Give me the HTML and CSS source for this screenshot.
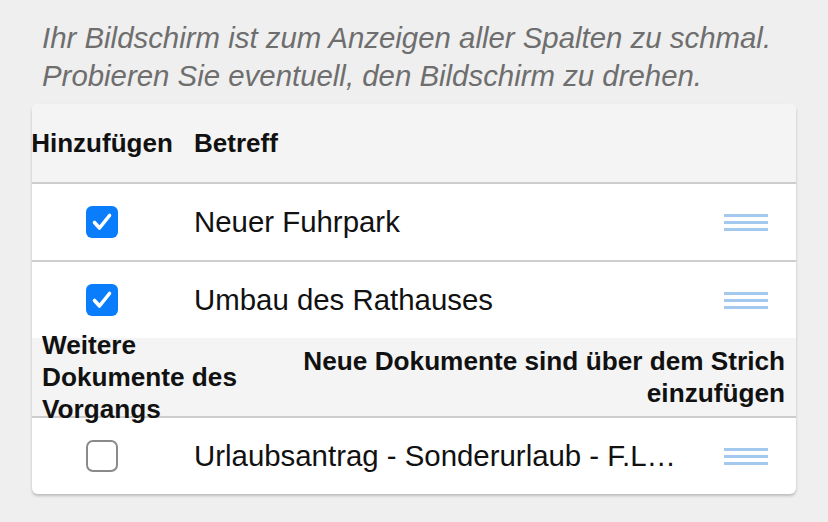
FILE: index.html
```html
<!DOCTYPE html>
<html lang="de">
<head>
<meta charset="utf-8">
<title>Dokumente</title>
<link rel="stylesheet" href="styles.css">
</head>
<body>
<p class="notice">Ihr Bildschirm ist zum Anzeigen aller Spalten zu schmal. Probieren Sie eventuell, den Bildschirm zu drehen.</p>
<div class="card">
  <div class="row head">
    <div class="col-check">Hinzufügen</div>
    <div class="col-title">Betreff</div>
  </div>
  <div class="row item">
    <div class="col-check"><span class="box checked"><svg viewBox="0 0 32 32" width="32" height="32"><polyline points="8.5,16.5 13.5,22 23.5,9.5" fill="none" stroke="#fff" stroke-width="3.6" stroke-linecap="round" stroke-linejoin="round"/></svg></span></div>
    <div class="col-title">Neuer Fuhrpark</div>
    <div class="handle"><i></i><i></i><i></i></div>
  </div>
  <div class="row item plain">
    <div class="col-check"><span class="box checked"><svg viewBox="0 0 32 32" width="32" height="32"><polyline points="8.5,16.5 13.5,22 23.5,9.5" fill="none" stroke="#fff" stroke-width="3.6" stroke-linecap="round" stroke-linejoin="round"/></svg></span></div>
    <div class="col-title">Umbau des Rathauses</div>
    <div class="handle"><i></i><i></i><i></i></div>
  </div>
  <div class="row section">
    <div class="section-left">Weitere Dokumente des Vorgangs</div>
    <div class="section-right">Neue Dokumente sind über dem Strich einzufügen</div>
  </div>
  <div class="row item plain">
    <div class="col-check"><span class="box"></span></div>
    <div class="col-title">Urlaubsantrag - Sonderurlaub - F.Lehmann</div>
    <div class="handle"><i></i><i></i><i></i></div>
  </div>
</div>
</body>
</html>
```

FILE: styles.css
```css
* { box-sizing: border-box; }
html, body { margin: 0; padding: 0; }
body {
  background: #efefef;
  font-family: "Liberation Sans", Arial, sans-serif;
  color: #111;
  width: 828px;
  height: 522px;
  overflow: hidden;
}
.notice {
  margin: 0;
  padding: 19px 30px 0 42px;
  font-style: italic;
  font-size: 29.4px;
  line-height: 38px;
  color: #6e6e6e;
}
.card {
  margin: 9px 32px 0 32px;
  background: #fff;
  border-radius: 6px;
  box-shadow: 0 2px 3px rgba(0, 0, 0, 0.22);
}
.row {
  display: flex;
  align-items: center;
}
.head {
  height: 80px;
  background: #f4f4f4;
  border-radius: 6px 6px 0 0;
  border-bottom: 2px solid #cdcdcd;
  font-weight: bold;
  font-size: 26px;
}
.col-check {
  width: 140px;
  flex: none;
  display: flex;
  justify-content: center;
  white-space: nowrap;
}
.col-title {
  flex: 1;
  min-width: 0;
  margin-left: 22px;
  white-space: nowrap;
  overflow: hidden;
  text-overflow: ellipsis;
}
.item {
  height: 78px;
  font-size: 29.4px;
  padding-right: 28px;
  border-bottom: 2px solid #cdcdcd;
}
.item.plain {
  height: 76px;
  border-bottom: none;
}
.box {
  width: 32px;
  height: 32px;
  border-radius: 7px;
  border: 2.5px solid #8a8a8a;
  background: #fff;
  display: block;
}
.box.checked {
  border: none;
  border-radius: 6px;
  background: #0a7dfd;
}
.box svg { display: block; }
.handle {
  width: 44px;
  margin-left: 44px;
  flex: none;
  display: flex;
  flex-direction: column;
  gap: 4px;
}
.handle i {
  display: block;
  height: 3px;
  background: #a3c9ef;
}
.section {
  height: 80px;
  background: #f4f4f4;
  border-bottom: 2px solid #cdcdcd;
  font-weight: bold;
  font-size: 26.2px;
  line-height: 32px;
  padding: 0 11px 0 10px;
  justify-content: space-between;
}
.section-left {
  width: 210px;
  flex: none;
}
.section-right {
  width: 525px;
  text-align: right;
}
```
